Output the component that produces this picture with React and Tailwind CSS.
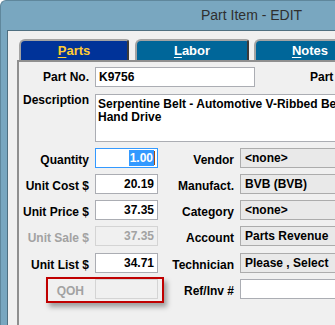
import React from 'react'

const LABEL = 'w-[70px] shrink-0 text-right whitespace-nowrap'
const RLABEL = 'w-[76px] shrink-0 text-right whitespace-nowrap pt-[3px]'
const DROP = ' pt-[3px]'
const BOX = 'h-[20px] shrink-0 border border-[#abadb3] bg-white flex items-center px-[3px] leading-none'
const SELECT = 'ml-[6px] h-[20px] w-[120px] shrink-0 border border-[#acacac] bg-[#e9e9e9] flex items-center pl-[4px] whitespace-nowrap leading-none'

function Tab({ label, first, active, className }) {
  return (
    <div
      className={
        'relative h-[21px] shrink-0 flex items-center justify-center border-t-2 border-l-2 border-[#a3a3a3] rounded-tl-[6px] rounded-tr-[3px] border-r-2 border-r-[#3a3a3a] text-[13px] font-bold ' +
        (active ? 'bg-[#003399] text-[#ffcc33] ' : 'bg-[#006699] text-white ') +
        className
      }
    >
      <span>
        <span className="underline underline-offset-[2px]">{first}</span>
        {label}
      </span>
    </div>
  )
}

function NumBox({ value, disabled }) {
  return (
    <div
      className={
        'ml-[6px] w-[63px] justify-end ' +
        BOX +
        (disabled ? ' !bg-[#f0f0f0] !border-[#d4d4d4] text-[#a2a2a2]' : '')
      }
    >
      {value}
    </div>
  )
}

export default function App() {
  return (
    <div className="w-[335px] h-[325px] overflow-hidden bg-[#79a7c0] rounded-tl-[6px] border-l border-t border-[#5f879c] flex flex-col font-['Liberation_Sans',Arial,sans-serif] text-[12px] text-black">
      {/* title bar */}
      <div className="h-[29px] shrink-0 flex items-center pl-[200px] text-[14px] text-[#2f2f2f]">
        Part Item - EDIT
      </div>

      {/* window body */}
      <div className="ml-[6px] flex-1 bg-[#f0f0f0] border-l border-t border-[#4f6f80] flex flex-col">
        {/* tabs */}
        <div className="flex pl-[11px] pt-[8px]">
          <Tab first="P" label="arts" active className="w-[110px]" />
          <Tab first="L" label="abor" className="ml-[6px] w-[114px]" />
          <Tab first="N" label="otes" className="ml-[5px] w-[112px]" />
        </div>

        {/* panel */}
        <div className="ml-[9px] flex-1 border-l-2 border-t-2 border-[#8f8f8f] font-bold">
          <div className="pt-[5px]">
            {/* Part No. */}
            <div className="flex items-center h-[20px] mb-[7px]">
              <div className={LABEL}>Part No.</div>
              <div className={'ml-[6px] w-[160px] ' + BOX}>K9756</div>
              <div className="ml-[55px] whitespace-nowrap">Part</div>
            </div>

            {/* Description */}
            <div className="flex items-start mb-[6px]">
              <div className={LABEL + ' leading-[13px]'}>Description</div>
              <div className="ml-[6px] h-[48px] w-[300px] shrink-0 border border-[#abadb3] bg-white pl-[2px] pt-[3px] leading-[13px] whitespace-nowrap">
                <div>Serpentine Belt - Automotive V-Ribbed Belt, Right</div>
                <div>Hand Drive</div>
              </div>
            </div>

            {/* Quantity */}
            <div className="flex items-center h-[20px] mb-[6px]">
              <div className={LABEL + DROP}>Quantity</div>
              <div className="ml-[6px] w-[63px] h-[20px] shrink-0 border border-[#3399ff] bg-white flex items-center justify-end pr-[2px] leading-none">
                <span className="bg-[#3399ff] text-white px-[1px] py-[2px]">1.00</span>
                <span className="w-[1px] h-[14px] bg-[#a04a10]" />
              </div>
              <div className={RLABEL}>Vendor</div>
              <div className={SELECT}>&lt;none&gt;</div>
            </div>

            {/* Unit Cost */}
            <div className="flex items-center h-[20px] mb-[6px]">
              <div className={LABEL + DROP}>Unit Cost $</div>
              <NumBox value="20.19" />
              <div className={RLABEL}>Manufact.</div>
              <div className={SELECT}>BVB (BVB)</div>
            </div>

            {/* Unit Price */}
            <div className="flex items-center h-[20px] mb-[6px]">
              <div className={LABEL + DROP}>Unit Price $</div>
              <NumBox value="37.35" />
              <div className={RLABEL}>Category</div>
              <div className={SELECT}>&lt;none&gt;</div>
            </div>

            {/* Unit Sale */}
            <div className="flex items-center h-[20px] mb-[7px]">
              <div className={LABEL + DROP + ' text-[#a2a2a2]'}>Unit Sale $</div>
              <NumBox value="37.35" disabled />
              <div className={RLABEL}>Account</div>
              <div className={SELECT}>Parts Revenue</div>
            </div>

            {/* Unit List */}
            <div className="flex items-center h-[20px] mb-[6px]">
              <div className={LABEL + DROP}>Unit List $</div>
              <NumBox value="34.71" />
              <div className={RLABEL}>Technician</div>
              <div className={SELECT}>Please , Select</div>
            </div>

            {/* QOH */}
            <div className="flex items-center h-[20px]">
              <div className="relative flex items-center">
                <div className={LABEL + DROP + ' pr-[5px] text-[#a2a2a2]'}>QOH</div>
                <NumBox value="" disabled />
                <div className="absolute left-[27px] top-[-2px] w-[118px] h-[26px] border-2 border-[#c00000] shadow-[3px_4px_5px_rgba(0,0,0,0.35)]" />
              </div>
              <div className={RLABEL}>Ref/Inv #</div>
              <div className="ml-[6px] h-[20px] w-[120px] shrink-0 border border-[#abadb3] bg-white" />
            </div>
          </div>
        </div>
      </div>
    </div>
  )
}
